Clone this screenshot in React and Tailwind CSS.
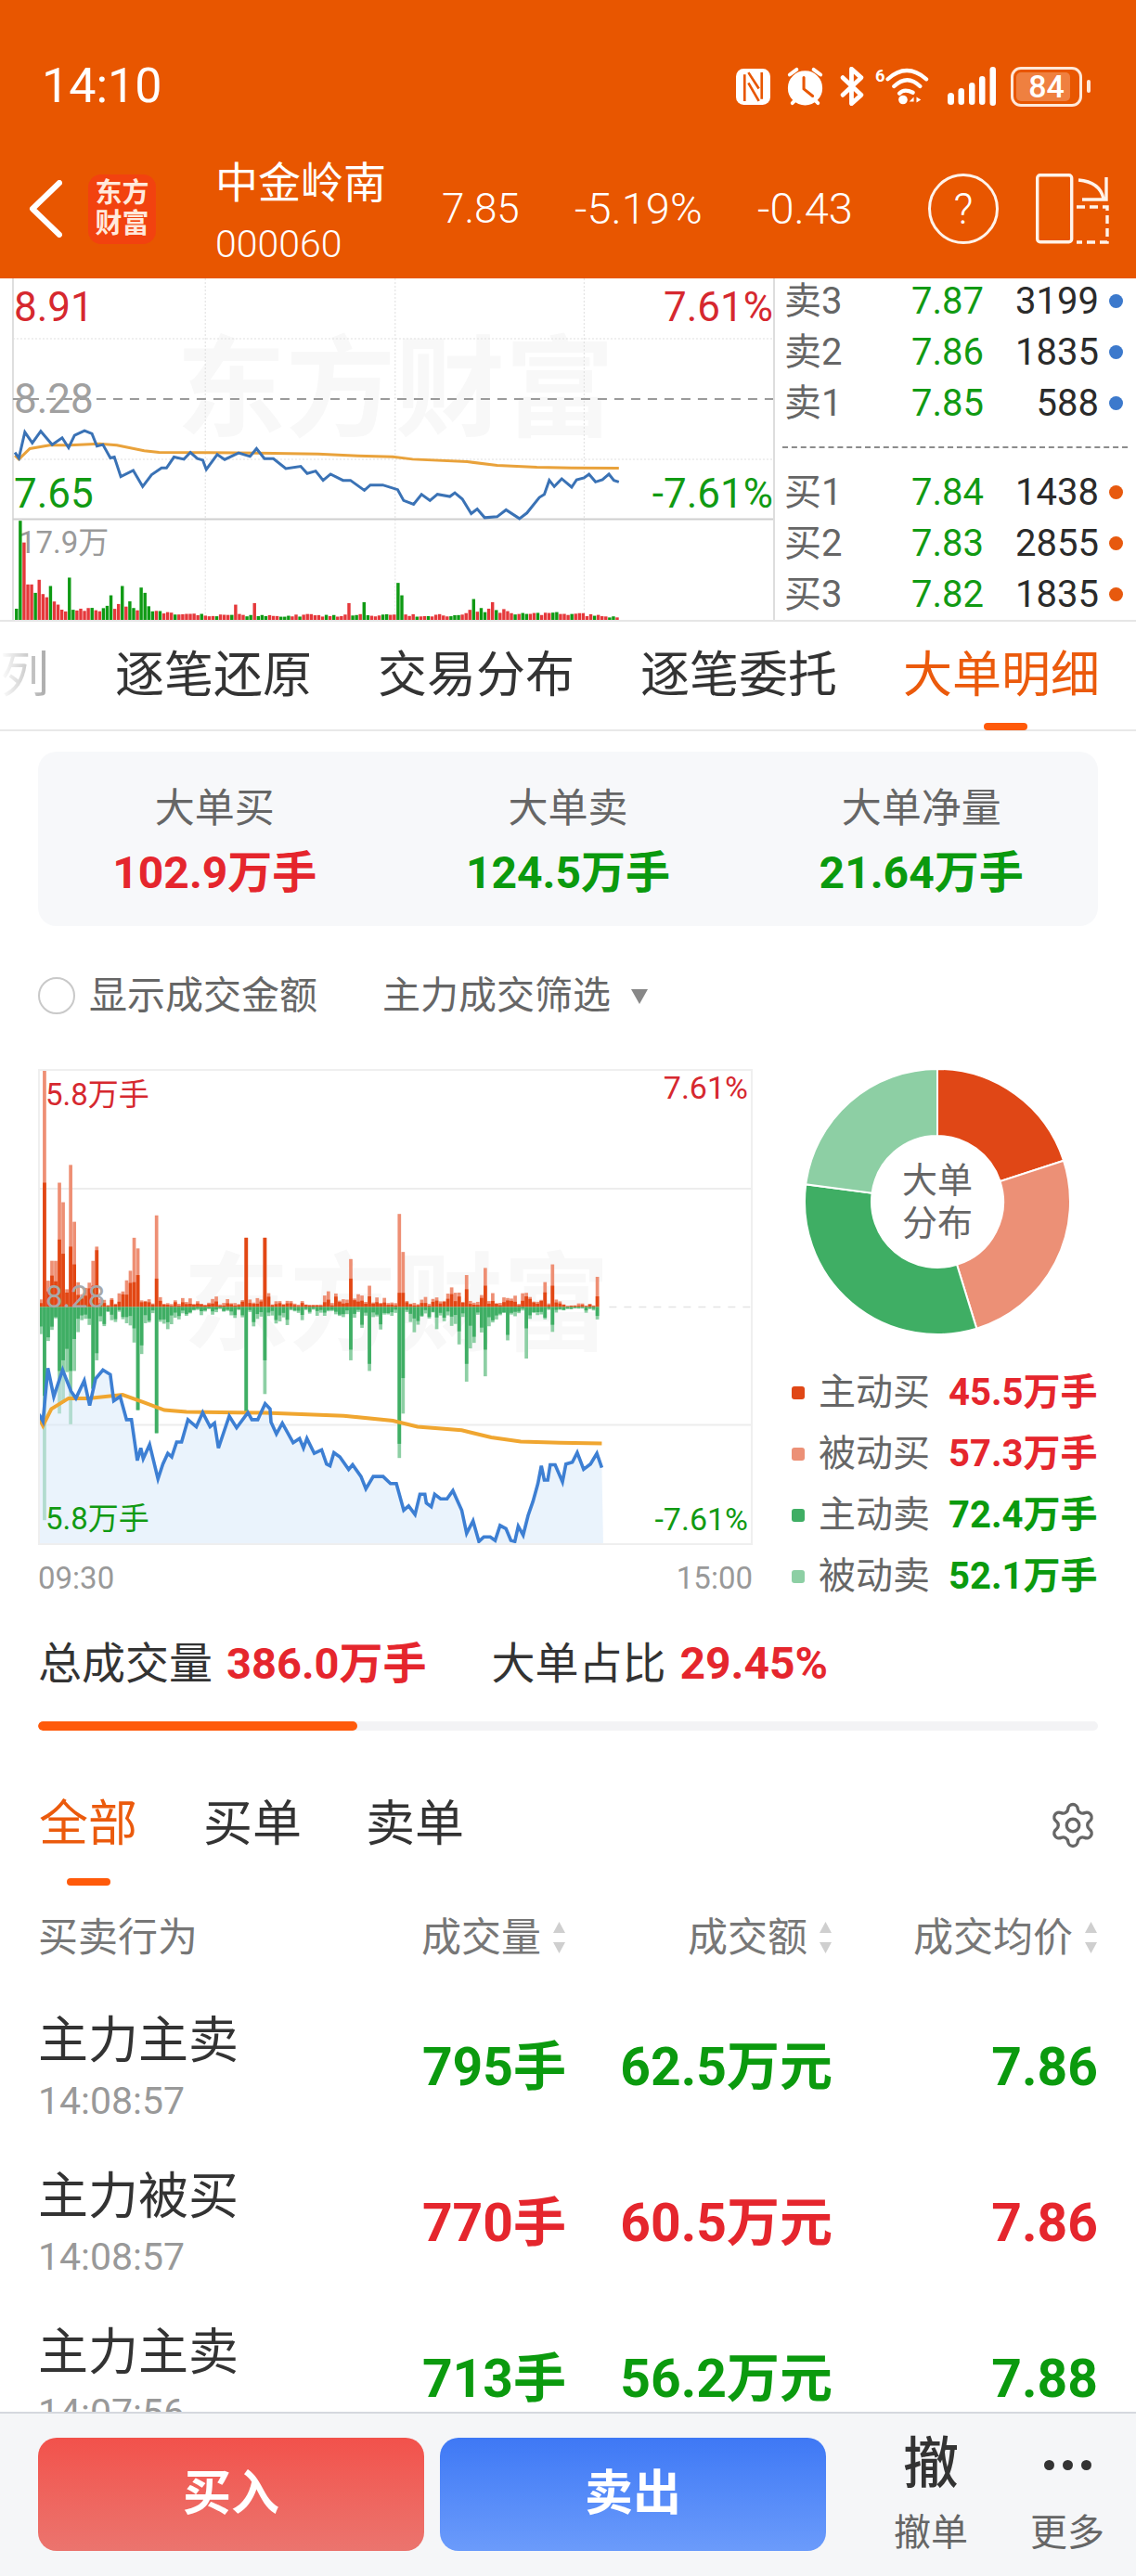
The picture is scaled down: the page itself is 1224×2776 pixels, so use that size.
import { Settings } from "lucide-react";

// 分时价格线，坐标按放大图取的
const line1 = [[30,590],[38,608],[50,525],[65,560],[82,522],[105,565],[125,543],[138,575],[150,535],[170,520],[185,530],[195,570],[207,565],[222,608],[230,605],[243,668],[268,648],[287,700],[305,662],[325,640],[335,640],[350,605],[370,612],[383,590],[397,610],[408,615],[415,645],[437,597],[452,613],[480,592],[503,603],[516,578],[532,610],[550,610],[575,642],[605,635],[618,658],[635,650],[650,680],[665,660],[690,680],[705,680],[733,712],[745,695],[770,695],[800,710],[812,745],[832,757],[848,725],[865,745],[880,725],[905,732],[915,720],[930,740],[948,787],[960,772],[975,800],[1000,797],[1018,775],[1045,803],[1060,785],[1085,735],[1095,725],[1105,680],[1115,700],[1130,675],[1150,702],[1160,678],[1175,672],[1185,660],[1198,685],[1212,678],[1225,660],[1235,680],[1245,685]];
const avg1 = [[30,600],[38,612],[60,578],[100,567],[140,567],[200,562],[235,567],[290,585],[320,590],[420,591],[520,592],[640,595],[720,601],[790,604],[830,612],[940,620],[1000,632],[1080,638],[1150,640],[1245,641]];
const line2 = [[80,1030],[88,1050],[98,900],[110,980],[128,905],[145,965],[155,985],[172,935],[183,1005],[195,930],[210,905],[225,918],[232,992],[245,980],[258,1045],[268,1045],[280,1160],[287,1125],[292,1155],[305,1115],[322,1212],[332,1170],[342,1140],[350,1150],[360,1108],[370,1108],[383,1045],[400,1065],[413,1025],[428,1065],[437,1055],[445,1125],[467,1035],[482,1068],[505,1025],[513,1045],[525,1045],[540,1000],[550,1015],[552,1052],[563,1085],[575,1055],[597,1110],[610,1098],[618,1125],[625,1098],[640,1140],[655,1130],[665,1170],[672,1175],[680,1138],[692,1150],[710,1185],[718,1172],[735,1205],[745,1240],[760,1205],[780,1205],[795,1225],[807,1225],[822,1300],[832,1288],[845,1312],[855,1255],[865,1255],[868,1280],[878,1290],[885,1255],[897,1268],[910,1268],[922,1245],[940,1300],[950,1365],[963,1330],[975,1388],[985,1375],[998,1375],[1008,1385],[1018,1343],[1030,1352],[1040,1385],[1048,1388],[1055,1345],[1065,1370],[1075,1315],[1085,1275],[1095,1225],[1102,1175],[1108,1215],[1115,1215],[1120,1172],[1130,1172],[1145,1220],[1152,1170],[1165,1165],[1175,1138],[1188,1185],[1202,1170],[1215,1140],[1225,1180]];
const avg2 = [[80,1040],[88,1062],[105,1015],[140,985],[180,985],[250,975],[290,995],[335,1018],[380,1023],[540,1026],[700,1034],[800,1048],[850,1065],[940,1075],[1000,1095],[1060,1107],[1140,1110],[1225,1112]];

const toPts = (arr) => arr.map((p) => p.join(",")).join(" ");

// 固定种子，保证每次柱子一样
function makeRand(seed) {
  let s = seed;
  return () => {
    s = (s * 16807) % 2147483647;
    return s / 2147483647;
  };
}

function lerp(table, x) {
  for (let i = 1; i < table.length; i++) {
    if (x <= table[i][0]) {
      const [x0, y0] = table[i - 1];
      const [x1, y1] = table[i];
      return y0 + ((y1 - y0) * (x - x0)) / (x1 - x0);
    }
  }
  return table[table.length - 1][1];
}

const volEnv = [[30,70],[60,110],[100,70],[130,40],[200,40],[240,70],[290,50],[320,25],[440,16],[660,16],[920,16],[950,40],[1000,35],[1050,20],[1130,25],[1248,6]];
const volSpikes = { 38: [320, "g"], 45: [250, "r"], 52: [115, "r"], 57: [115, "r"], 63: [115, "r"], 78: [130, "r"], 95: [110, "g"], 140: [137, "g"], 220: [80, "g"], 240: [110, "g"], 280: [105, "g"], 285: [88, "g"], 470: [50, "r"], 508: [55, "r"], 698: [55, "r"], 730: [58, "g"], 800: [120, "g"], 808: [80, "g"], 948: [68, "g"], 985: [58, "r"] };

function makeVolBars() {
  const rand = makeRand(4711);
  const bars = [];
  for (let i = 0; i < 160; i++) {
    const x = 30 + i * 7.6;
    let h = 4 + lerp(volEnv, x) * (0.45 + rand() * 0.55);
    let green = rand() > 0.62;
    for (const k in volSpikes) {
      if (Math.abs(k - x) < 3.8) {
        h = volSpikes[k][0];
        green = volSpikes[k][1] === "g";
      }
    }
    bars.push({ x, h, green });
  }
  return bars;
}

const upEnv = [[80,190],[110,260],[160,170],[190,130],[215,15],[240,80],[270,170],[300,80],[350,60],[420,30],[500,50],[560,50],[640,30],[670,60],[710,100],[800,70],[870,50],[940,90],[985,100],[1040,50],[1100,70],[1130,90],[1145,10],[1225,14]];
const downEnv = [[80,250],[130,220],[190,120],[240,110],[280,190],[330,120],[390,70],[420,15],[470,55],[560,80],[640,40],[700,80],[745,140],[790,70],[880,110],[950,140],[1000,150],[1050,70],[1100,50],[1130,70],[1150,15],[1225,22]];

// [红浅, 红深, 绿浅, 绿深]
const flowSpikes = { 88: [668, 350, 600, 250], 116: [350, 190, 300, 180], 122: [295, 150, 270, 150], 140: [400, 170, 330, 180], 147: [240, 120, 180, 90], 183: [130, 60, 230, 230], 195: [170, 160, 150, 130], 268: [195, 70, 100, 60], 280: [165, 90, 290, 290], 316: [258, 80, 355, 355], 497: [195, 195, 300, 300], 533: [195, 195, 245, 150], 714: [135, 80, 150, 120], 745: [60, 30, 180, 160], 812: [262, 40, 425, 385], 820: [155, 40, 300, 200], 950: [90, 50, 210, 160], 987: [110, 60, 195, 120], 1065: [40, 30, 145, 60], 1120: [120, 60, 70, 50], 1210: [85, 30, 35, 25] };

function makeFlowBars() {
  const rand = makeRand(907);
  const bars = [];
  for (let i = 0; i < 150; i++) {
    const x = 80 + i * 7.6;
    const upL = 2 + lerp(upEnv, x) * (0.1 + rand() * rand() * 0.9);
    const upD = upL * (0.35 + rand() * 0.5);
    const dnL = 2 + lerp(downEnv, x) * (0.1 + rand() * rand() * 0.9);
    const dnD = dnL * (0.45 + rand() * 0.45);
    let v = [upL, upD, dnL, dnD];
    for (const k in flowSpikes) {
      if (Math.abs(k - x) < 3.8) v = flowSpikes[k];
    }
    bars.push({ x, v });
  }
  return bars;
}

const volBars = makeVolBars();
const flowBars = makeFlowBars();

function donutSlice(start, end, color) {
  const R = 143;
  const r = 71;
  const a0 = (start * Math.PI) / 180;
  const a1 = (end * Math.PI) / 180;
  const large = end - start > 180 ? 1 : 0;
  const p = (rad, ang) => `${143 + rad * Math.sin(ang)} ${143 - rad * Math.cos(ang)}`;
  return <path key={color} d={`M${p(R, a0)} A${R} ${R} 0 ${large} 1 ${p(R, a1)} L${p(r, a1)} A${r} ${r} 0 ${large} 0 ${p(r, a0)} Z`} fill={color} stroke="#fff" strokeWidth="2" />;
}

function StatusBar() {
  return (
    <div className="h-[150px] pt-[65px] pl-[45px] pr-[49px] flex items-start justify-between text-white">
      <span className="text-[52px] leading-[56px]">14:10</span>
      <div className="flex items-center h-[56px]">
        <svg width="37" height="39" viewBox="0 0 36 38" fill="none">
          <rect x="0" y="0" width="36" height="38" rx="8" fill="#fff" />
          <path d="M9 6V34M27 4V32M13 4L24 21M13 15L24 34" stroke="#E85600" strokeWidth="2.6" />
        </svg>
        <svg className="ml-[16px]" width="43" height="42" viewBox="0 0 43 44" fill="none" stroke="#fff" strokeWidth="4" strokeLinecap="round">
          <circle cx="21.5" cy="24" r="17.5" fill="#fff" />
          <path d="M20 12V25L30 33" stroke="#E85600" strokeWidth="3.2" />
          <path d="M4 9L12 3M39 9L31 3M7 41L11 37M36 41L32 37" />
        </svg>
        <svg className="ml-[16px]" width="26" height="42" viewBox="0 0 25 40" fill="none" stroke="#fff" strokeWidth="4.6" strokeLinejoin="round" strokeLinecap="round">
          <path d="M3 11L22 29L12 38V2L22 11L3 29" />
        </svg>
        <svg className="ml-[12px]" width="58" height="42" viewBox="0 0 60 42" fill="none" stroke="#fff" strokeWidth="4.4" strokeLinecap="round">
          <text x="0" y="16" fontSize="19" fontWeight="700" fill="#fff" stroke="none">6</text>
          <path d="M14 13Q35 -6 57 13M21 21Q36 7 50 21M27 29Q32 23 42 28" />
          <circle cx="31" cy="36" r="5" fill="#fff" stroke="none" />
          <path d="M38 38L43 33V38ZM46 33L51 36L46 39Z" fill="#fff" stroke="none" />
        </svg>
        <svg className="ml-[20px]" width="53" height="42" viewBox="0 0 53 42" fill="#fff">
          <rect x="0" y="28" width="7" height="13" rx="3.5" />
          <rect x="11.5" y="23" width="6.5" height="18" rx="3.25" />
          <rect x="23" y="17" width="6.5" height="24" rx="3.25" />
          <rect x="34" y="10" width="6.5" height="31" rx="3.25" />
          <rect x="45.5" y="0" width="6.5" height="42" rx="3.25" />
        </svg>
        <div className="ml-[15px] w-[77px] h-[43px] rounded-[11px] border-[3px] border-[#FFE8D9] p-[3px] relative">
          <div className="w-[58px] h-full rounded-[5px] bg-[#EF8040]"></div>
          <span className="absolute inset-0 flex items-center justify-center text-[34px] font-medium">84</span>
        </div>
        <div className="ml-[5px] w-[4px] h-[14px] rounded-full bg-[#FFE8D9]"></div>
      </div>
    </div>
  );
}

function StockBar() {
  return (
    <div className="h-[150px] flex items-center text-white">
      <svg className="ml-[31px]" width="36" height="62" viewBox="0 0 36 62" fill="none" stroke="#fff" strokeWidth="6" strokeLinecap="round" strokeLinejoin="round">
        <path d="M33 3L4 31l29 28" />
      </svg>
      <div className="ml-[28px] w-[73px] h-[75px] rounded-[14px] bg-[#F2420F] flex flex-col items-center justify-center text-[29px] leading-[33px] text-[#FFE9DC] font-bold">
        <span>东方</span>
        <span>财富</span>
      </div>
      <div className="ml-[64px] w-[244px] mt-[5px] flex flex-col gap-[15px]">
        <span className="text-[46px] leading-[56px]">中金岭南</span>
        <span className="text-[41px] leading-[46px] font-light">000060</span>
      </div>
      <span className="w-[143px] text-[44px] font-light">7.85</span>
      <span className="w-[197px] text-[47px] font-light">-5.19%</span>
      <span className="w-[184px] text-[47px] font-light">-0.43</span>
      <div className="w-[76px] h-[76px] rounded-full border-[3px] border-[#FFF3EA] flex items-center justify-center text-[46px] font-light">?</div>
      <svg className="ml-[40px]" width="82" height="76" viewBox="0 0 82 76" fill="none" stroke="#FFF3EA" strokeWidth="3.4">
        <rect x="1.7" y="1.7" width="37" height="72" rx="3" />
        <path d="M46 7Q69 9 73 27M76 4V28H50" />
        <path d="M44 36H77V74H44" strokeDasharray="9 5" />
      </svg>
    </div>
  );
}

function QuoteRow({ label, price, vol, dot }) {
  return (
    <div className="h-[55px] pl-[10px] flex items-center text-[40px]">
      <span className="w-[137px] text-[#666]">{label}</span>
      <span className="w-[90px] text-[#119A13]">{price}</span>
      <span className="w-[112px] text-right text-[#2B2B2B]">{vol}</span>
      <span className={`ml-[11px] w-[15px] h-[15px] rounded-full ${dot}`}></span>
    </div>
  );
}

function MiniChart() {
  return (
    <div className="relative w-[835px] h-full border-r-2 border-[#DDD] overflow-hidden">
      <span className="absolute left-[190px] top-[56px] text-[118px] leading-[130px] font-bold text-[#F8F8F8] whitespace-nowrap">东方财富</span>
      <svg className="absolute inset-0" width="835" height="370" viewBox="0 30 1559 1105" preserveAspectRatio="none" fill="none">
        <path d="M26 30V1132" stroke="#DDD" strokeWidth="2" vectorEffect="non-scaling-stroke" />
        <path d="M26 224H1559M26 612H1559M413 30V805M795 30V805M1175 30V805M413 805V1132M795 805V1132M1175 805V1132" stroke="#DFDFDF" strokeWidth="1" strokeDasharray="2 2" vectorEffect="non-scaling-stroke" />
        <path d="M26 418H1559" stroke="#9A9A9A" strokeWidth="2" strokeDasharray="10 8" vectorEffect="non-scaling-stroke" />
        <path d="M26 805H1559" stroke="#CFCFCF" strokeWidth="2" vectorEffect="non-scaling-stroke" />
        <path d="M26 1132H1559" stroke="#E2E2E2" strokeWidth="2" vectorEffect="non-scaling-stroke" />
        <polyline points={toPts(avg1)} stroke="#E9A23B" strokeWidth="3" vectorEffect="non-scaling-stroke" />
        <polyline points={toPts(line1)} stroke="#3A72B5" strokeWidth="3" vectorEffect="non-scaling-stroke" />
      </svg>
      <span className="absolute left-[15px] top-[6px] text-[44px] leading-[50px] text-[#D6282F]">8.91</span>
      <span className="absolute right-[0px] top-[6px] text-[44px] leading-[50px] text-[#D6282F]">7.61%</span>
      <span className="absolute left-[15px] top-[105px] text-[44px] leading-[50px] text-[#A0A0A0]">8.28</span>
      <span className="absolute left-[15px] top-[207px] text-[44px] leading-[50px] text-[#119A13]">7.65</span>
      <span className="absolute right-[0px] top-[207px] text-[44px] leading-[50px] text-[#119A13]">-7.61%</span>
      <span className="absolute left-[20px] top-[265px] text-[33px] leading-[40px] text-[#9A9A9A]">17.9万</span>
      <svg className="absolute inset-0" width="835" height="370" viewBox="0 30 1559 1105" preserveAspectRatio="none">
        {volBars.map((b) => (
          <rect key={b.x} x={b.x} y={1130 - b.h} width="6.4" height={b.h} fill={b.green ? "#0F9A14" : "#E5383B"} />
        ))}
      </svg>
    </div>
  );
}

function QuotePanel() {
  return (
    <div className="flex-1 -mt-[3px]">
      <QuoteRow label="卖3" price="7.87" vol="3199" dot="bg-[#3C79CC]" />
      <QuoteRow label="卖2" price="7.86" vol="1835" dot="bg-[#3C79CC]" />
      <QuoteRow label="卖1" price="7.85" vol="588" dot="bg-[#3C79CC]" />
      <div className="ml-[8px] mr-[9px] mt-[19px] mb-[20px] border-t-2 border-dashed border-[#8C8C8C]"></div>
      <QuoteRow label="买1" price="7.84" vol="1438" dot="bg-[#E7590E]" />
      <QuoteRow label="买2" price="7.83" vol="2855" dot="bg-[#E7590E]" />
      <QuoteRow label="买3" price="7.82" vol="1835" dot="bg-[#E7590E]" />
    </div>
  );
}

function TabRow() {
  return (
    <div className="h-[118px] relative flex items-center border-b-2 border-[#E8E8E8] text-[53px] text-[#333] pt-[2px]">
      <span className="w-[50px] bg-gradient-to-r from-white to-[#AAA] bg-clip-text text-transparent">列</span>
      <div className="ml-[74px] flex gap-[71px]">
        <span>逐笔还原</span>
        <span>交易分布</span>
        <span>逐笔委托</span>
        <span className="text-[#EB5A0C]">大单明细</span>
      </div>
      <div className="absolute left-[1060px] -bottom-[1px] w-[47px] h-[8px] rounded-full bg-[#FF5A0A]"></div>
    </div>
  );
}

function Summary({ title, value, color }) {
  return (
    <div className="flex flex-col items-center pt-[3px]">
      <span className="text-[43px] leading-[50px] text-[#666]">{title}</span>
      <span className={`mt-[20px] text-[48px] leading-[50px] font-bold ${color}`}>{value}</span>
    </div>
  );
}

function FlowChart() {
  return (
    <div className="relative w-[770px] h-[513px] border-2 border-[#EFEFEF] overflow-hidden">
      <span className="absolute left-[154px] top-[190px] text-[115px] leading-[125px] font-bold text-[#F8F8F8] whitespace-nowrap">东方财富</span>
      <svg className="absolute -left-[2px] -top-[2px]" width="770" height="513" viewBox="78 58 1454 1340" preserveAspectRatio="none" fill="none">
        <path d="M78 395H1532M78 1060H1532" stroke="#EDEDED" strokeWidth="2" vectorEffect="non-scaling-stroke" />
        <path d="M1240 728H1532" stroke="#E4E4E4" strokeWidth="1.5" strokeDasharray="8 8" vectorEffect="non-scaling-stroke" />
        {flowBars.map((b) => (
          <g key={b.x}>
            <rect x={b.x} y={728 - b.v[0]} width="7" height={b.v[0]} fill="#EE8F74" />
            <rect x={b.x} y={728 - b.v[1]} width="7" height={b.v[1]} fill="#E24714" />
            <rect x={b.x} y="728" width="7" height={b.v[2]} fill="#8DCFA4" />
            <rect x={b.x} y="728" width="7" height={b.v[3]} fill="#3FAE64" />
          </g>
        ))}
        <polygon points={`80,1398 ${toPts(line2)} 1228,1398`} fill="#D6E8F9" fillOpacity="0.5" />
        <polyline points={toPts(avg2)} stroke="#F0A630" strokeWidth="4" vectorEffect="non-scaling-stroke" />
        <polyline points={toPts(line2)} stroke="#3D7FD3" strokeWidth="3.6" vectorEffect="non-scaling-stroke" />
      </svg>
      <span className="absolute left-[6px] top-[6px] text-[33px] leading-[40px] text-[#D6282F]">5.8万手</span>
      <span className="absolute right-[3px] top-[-2px] text-[34px] leading-[40px] text-[#D6282F]">7.61%</span>
      <span className="absolute left-[6px] top-[224px] text-[33px] leading-[40px] text-[#A8A8A8]">8.28</span>
      <span className="absolute left-[6px] top-[463px] text-[33px] leading-[40px] text-[#119A13]">5.8万手</span>
      <span className="absolute right-[3px] top-[463px] text-[34px] leading-[40px] text-[#119A13]">-7.61%</span>
    </div>
  );
}

function LegendRow({ swatch, label, value, color }) {
  return (
    <div className="h-[66px] flex items-center">
      <span className={`w-[14px] h-[14px] rounded-[3px] ${swatch}`}></span>
      <span className="ml-[15px] w-[140px] text-[40px] text-[#666]">{label}</span>
      <span className={`text-[40px] font-bold whitespace-nowrap ${color}`}>{value}</span>
    </div>
  );
}

function SortArrows() {
  return (
    <svg className="ml-[12px]" width="15" height="38" viewBox="0 0 15 38" fill="#CFCFCF">
      <path d="M7.5 2L14 14H1z" />
      <path d="M7.5 36L14 24H1z" />
    </svg>
  );
}

function TradeRow({ title, time, qty, amount, price, color }) {
  return (
    <div className="h-[168px] flex items-center">
      <div className="w-[400px] flex flex-col gap-[12px]">
        <span className="text-[54px] leading-[60px] text-[#333]">{title}</span>
        <span className="text-[41px] leading-[44px] text-[#999]">{time}</span>
      </div>
      <span className={`w-[169px] text-right text-[57px] font-bold ${color}`}>{qty}</span>
      <span className={`w-[287px] text-right text-[57px] font-bold ${color}`}>{amount}</span>
      <span className={`w-[286px] text-right text-[57px] font-bold ${color}`}>{price}</span>
    </div>
  );
}

function BottomBar() {
  return (
    <div className="h-[177px] shrink-0 border-t-2 border-[#D5D8DE] bg-[#F5F6F8] pt-[26px] pl-[41px] flex items-start">
      <div className="w-[416px] h-[122px] rounded-[20px] bg-gradient-to-b from-[#F2514B] to-[#EB746E] flex items-center justify-center text-[52px] font-bold text-white">买入</div>
      <div className="ml-[17px] w-[416px] h-[122px] rounded-[20px] bg-gradient-to-b from-[#3E78F5] to-[#6B9BFB] flex items-center justify-center text-[52px] font-bold text-white">卖出</div>
      <div className="ml-[73px] w-[80px] flex flex-col items-center">
        <span className="h-[58px] flex items-center text-[60px] font-medium text-[#333]">撤</span>
        <span className="mt-[22px] text-[40px] leading-[45px] text-[#666]">撤单</span>
      </div>
      <div className="ml-[67px] w-[80px] flex flex-col items-center">
        <div className="h-[58px] flex items-center gap-[9px]">
          <span className="w-[11px] h-[11px] rounded-full bg-[#333]"></span>
          <span className="w-[11px] h-[11px] rounded-full bg-[#333]"></span>
          <span className="w-[11px] h-[11px] rounded-full bg-[#333]"></span>
        </div>
        <span className="mt-[22px] text-[40px] leading-[45px] text-[#666]">更多</span>
      </div>
    </div>
  );
}

export default function App() {
  return (
    <div className="w-[1224px] h-[2776px] flex flex-col overflow-hidden bg-white font-['Roboto','Noto_Sans_CJK_SC',sans-serif]">
      <div className="h-[300px] shrink-0 bg-[#E85600]">
        <StatusBar />
        <StockBar />
      </div>

      <div className="flex-1 min-h-0 overflow-hidden">
        {/* 分时和五档 */}
        <div className="h-[370px] flex border-b-2 border-[#E6E6E6]">
          <MiniChart />
          <QuotePanel />
        </div>

        <TabRow />

        <div className="px-[41px]">
          <div className="mt-[22px] h-[188px] rounded-[20px] bg-[#F7F8FA] grid grid-cols-3 items-center">
            <Summary title="大单买" value="102.9万手" color="text-[#E5262D]" />
            <Summary title="大单卖" value="124.5万手" color="text-[#0B9A0E]" />
            <Summary title="大单净量" value="21.64万手" color="text-[#0B9A0E]" />
          </div>

          <div className="mt-[50px] h-[50px] flex items-center text-[41px] text-[#666]">
            <span className="w-[40px] h-[40px] rounded-full border-2 border-[#C9C9C9]"></span>
            <span className="ml-[15px] pt-[2px]">显示成交金额</span>
            <span className="ml-[70px] pt-[2px]">主力成交筛选</span>
            <svg className="ml-[22px]" width="18" height="18" viewBox="0 0 18 18" fill="#888">
              <path d="M0 2h18L9 18z" />
            </svg>
          </div>

          <div className="mt-[54px] h-[616px] flex">
            <div className="w-[770px]">
              <FlowChart />
              <div className="mt-[16px] h-[40px] flex items-center justify-between text-[33px] text-[#999]">
                <span>09:30</span>
                <span>15:00</span>
              </div>
            </div>
            <div className="flex-1">
              <div className="relative ml-[56px] w-[286px] h-[286px]">
                <svg width="286" height="286" viewBox="0 0 286 286">
                  {donutSlice(0, 72, "#E04716")}
                  {donutSlice(72, 162.8, "#EC9076")}
                  {donutSlice(162.8, 277.5, "#3FAE64")}
                  {donutSlice(277.5, 360, "#8DCFA4")}
                </svg>
                <div className="absolute inset-0 flex flex-col items-center justify-center text-[38px] leading-[46px] text-[#666]">
                  <span>大单</span>
                  <span>分布</span>
                </div>
              </div>
              <div className="mt-[30px] ml-[42px]">
                <LegendRow swatch="bg-[#E04716]" label="主动买" value="45.5万手" color="text-[#E5262D]" />
                <LegendRow swatch="bg-[#EC9076]" label="被动买" value="57.3万手" color="text-[#E5262D]" />
                <LegendRow swatch="bg-[#3FAE64]" label="主动卖" value="72.4万手" color="text-[#0B9A0E]" />
                <LegendRow swatch="bg-[#8DCFA4]" label="被动卖" value="52.1万手" color="text-[#0B9A0E]" />
              </div>
            </div>
          </div>

          <div className="h-[50px] flex items-center text-[47px] text-[#333] whitespace-nowrap">
            <span>总成交量</span>
            <span className="ml-[15px] text-[47px] font-bold text-[#E5262D]">386.0万手</span>
            <span className="ml-[70px]">大单占比</span>
            <span className="ml-[15px] text-[48px] font-bold text-[#E5262D]">29.45%</span>
          </div>

          <div className="mt-[37px] h-[10px] rounded-full bg-[#F3F3F5] overflow-hidden">
            <div className="w-[344px] h-full rounded-full bg-[#FF5A0A]"></div>
          </div>

          <div className="mt-[72px] h-[60px] flex items-center text-[53px] text-[#333]">
            <span className="ml-[1px] text-[#EB5A0C]">全部</span>
            <span className="ml-[71px]">买单</span>
            <span className="ml-[69px]">卖单</span>
            <Settings className="ml-auto" size={54} color="#666" strokeWidth={1.5} />
          </div>
          <div className="mt-[27px] ml-[31px] w-[47px] h-[8px] rounded-full bg-[#FF5A0A]"></div>

          <div className="mt-[31px] h-[50px] flex items-center text-[43px] text-[#777]">
            <span className="w-[400px]">买卖行为</span>
            <div className="w-[169px] flex items-center justify-end whitespace-nowrap">成交量<SortArrows /></div>
            <div className="w-[287px] flex items-center justify-end whitespace-nowrap">成交额<SortArrows /></div>
            <div className="w-[286px] flex items-center justify-end whitespace-nowrap">成交均价<SortArrows /></div>
          </div>

          <div className="mt-[31px]">
            <TradeRow title="主力主卖" time="14:08:57" qty="795手" amount="62.5万元" price="7.86" color="text-[#0B9A0E]" />
            <TradeRow title="主力被买" time="14:08:57" qty="770手" amount="60.5万元" price="7.86" color="text-[#E5262D]" />
            <TradeRow title="主力主卖" time="14:07:56" qty="713手" amount="56.2万元" price="7.88" color="text-[#0B9A0E]" />
          </div>
        </div>
      </div>

      <BottomBar />
    </div>
  );
}
